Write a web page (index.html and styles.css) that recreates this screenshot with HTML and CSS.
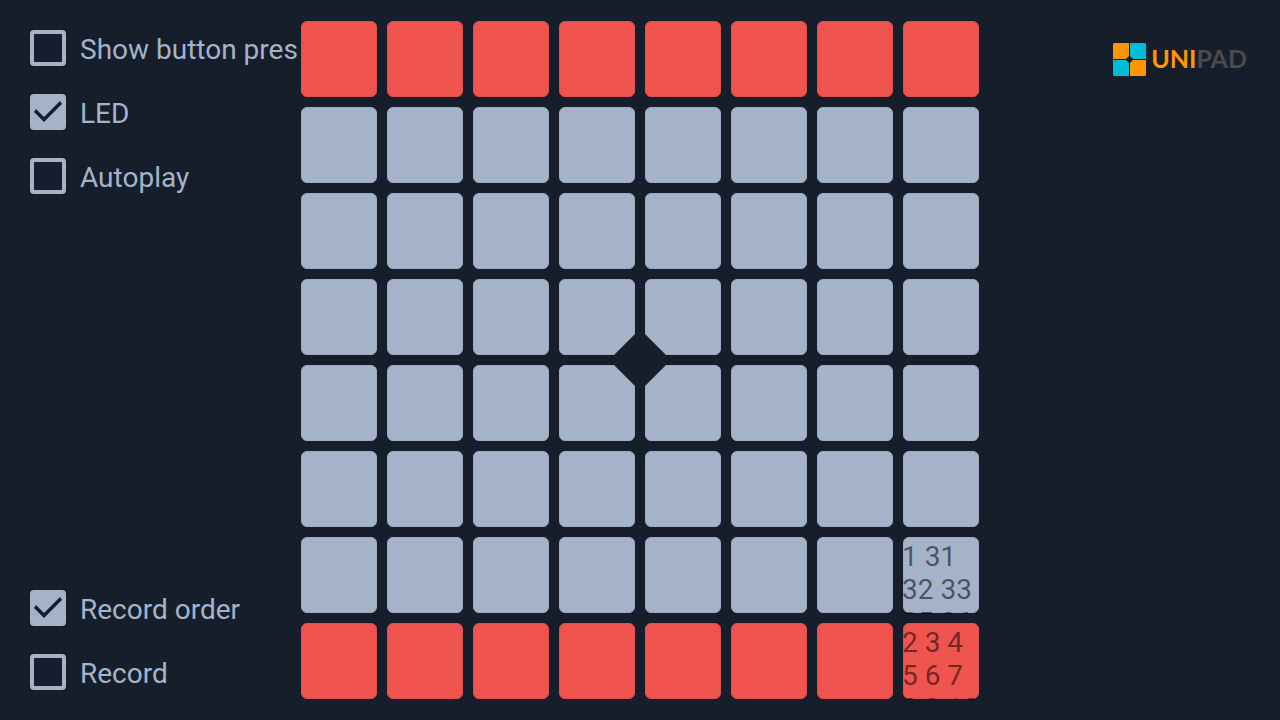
FILE: index.html
```html
<!DOCTYPE html>
<html lang="en">
<head>
	<meta charset="UTF-8">
	<title>UniPad</title>
	<link rel="stylesheet" href="styles.css">
</head>
<body>
	<!-- options -->
	<form class="options">
		<div class="group">
			<label class="option"><input type="checkbox"><span>Show button pres</span></label>
			<label class="option"><input type="checkbox" checked><span>LED</span></label>
			<label class="option"><input type="checkbox"><span>Autoplay</span></label>
		</div>
		<div class="group">
			<label class="option"><input type="checkbox" checked><span>Record order</span></label>
			<label class="option"><input type="checkbox"><span>Record</span></label>
		</div>
	</form>

	<!-- pads -->
	<main class="board" id="board"></main>

	<!-- logo -->
	<div class="side">
		<a class="logo" href="#">
			<svg width="33" height="33" viewBox="0 0 33 33">
				<path fill="#ff9500" d="M1 0H16V13L13 16H0V1Z"/>
				<path fill="#00bcd9" d="M17 0H32L33 1V16H20L17 13Z"/>
				<path fill="#00bcd9" d="M0 17H13L16 20V33H1L0 32Z"/>
				<path fill="#ff9500" d="M20 17H33V32L32 33H17V20Z"/>
			</svg>
			<span class="name"><span class="uni">UNI</span>PAD</span>
		</a>
	</div>

	<script src="board.js"></script>
</body>
</html>
```
FILE: styles.css
```css
*{
	box-sizing: border-box;
}
body{
	margin: 0;
	min-height: 100vh;
	display: grid;
	grid-template-columns: minmax(0, 1fr) auto minmax(0, 1fr);
	background: #171e2b;
	color: #a5b3ca;
	font-family: Roboto, sans-serif;
	font-size: 28px;
	line-height: 33px;
}

/* options */
.options{
	display: flex;
	flex-direction: column;
	justify-content: space-between;
	padding: 16px 0 16px 30px;
	overflow: hidden;
}
.option{
	display: flex;
	align-items: center;
	gap: 14px;
	height: 64px;
	white-space: nowrap;
}
.option span{
	padding-top: 2px;
}
.option input{
	appearance: none;
	flex: none;
	width: 36px;
	height: 36px;
	margin: 0;
	border: 4px solid #a5b3ca;
	border-radius: 4px;
}
.option input:checked{
	background: #a5b3ca;
}
.option input:checked::before{
	content: "";
	display: block;
	width: 28px;
	height: 28px;
	background: #171e2b;
	clip-path: polygon(0 14px, 2px 11px, 10px 19px, 26px 3px, 28px 6px, 10px 24px);
}

/* pads */
.board{
	position: relative;
	height: calc(100vh - 42px);
	margin: 21px 0;
	aspect-ratio: 1;
	display: grid;
	grid-template: repeat(8, minmax(0, 1fr)) / repeat(8, minmax(0, 1fr));
	gap: 10px;
}
.board::after{
	content: "";
	position: absolute;
	top: calc(50% - 31px);
	left: calc(50% - 31px);
	width: 62px;
	height: 62px;
	background: #171e2b;
	clip-path: polygon(50% 0, 100% 50%, 50% 100%, 0 50%);
}
.pad{
	position: relative;
	padding: 0;
	border: 1px solid #9dabc1;
	border-radius: 6px;
	background: #a5b3ca;
}
.pad.red{
	border-color: #e14f4c;
	background: #f0544f;
}
.order{
	position: absolute;
	inset: -2px;
	padding-top: 4px;
	overflow: hidden;
	color: rgba(0, 0, 0, 0.54);
	font-family: Roboto, sans-serif;
	font-size: 28px;
	line-height: 33px;
	text-align: left;
}

/* logo */
.side{
	padding: 42px 33px 0 0;
}
.logo{
	display: flex;
	justify-content: flex-end;
	align-items: center;
	gap: 5px;
	text-decoration: none;
}
.name{
	padding-bottom: 2px;
	color: #4b4b4b;
	font-family: Lato, sans-serif;
	font-size: 25px;
	font-weight: 700;
}
.uni{
	color: #ff9500;
}
```
FILE: board.js
```js
var board = document.getElementById("board");
var orders = {
	"6-7": "1 31 32 33 35 36",
	"7-7": "2 3 4 5 6 7 8 9 10"
};
for (var y = 0; y < 8; y++) {
	for (var x = 0; x < 8; x++) {
		var pad = document.createElement("button");
		pad.type = "button";
		pad.className = "pad";
		if (y == 0 || y == 7) {
			pad.className += " red";
		}
		var order = orders[y + "-" + x];
		if (order) {
			var text = document.createElement("span");
			text.className = "order";
			text.textContent = order;
			pad.appendChild(text);
		}
		board.appendChild(pad);
	}
}
```
